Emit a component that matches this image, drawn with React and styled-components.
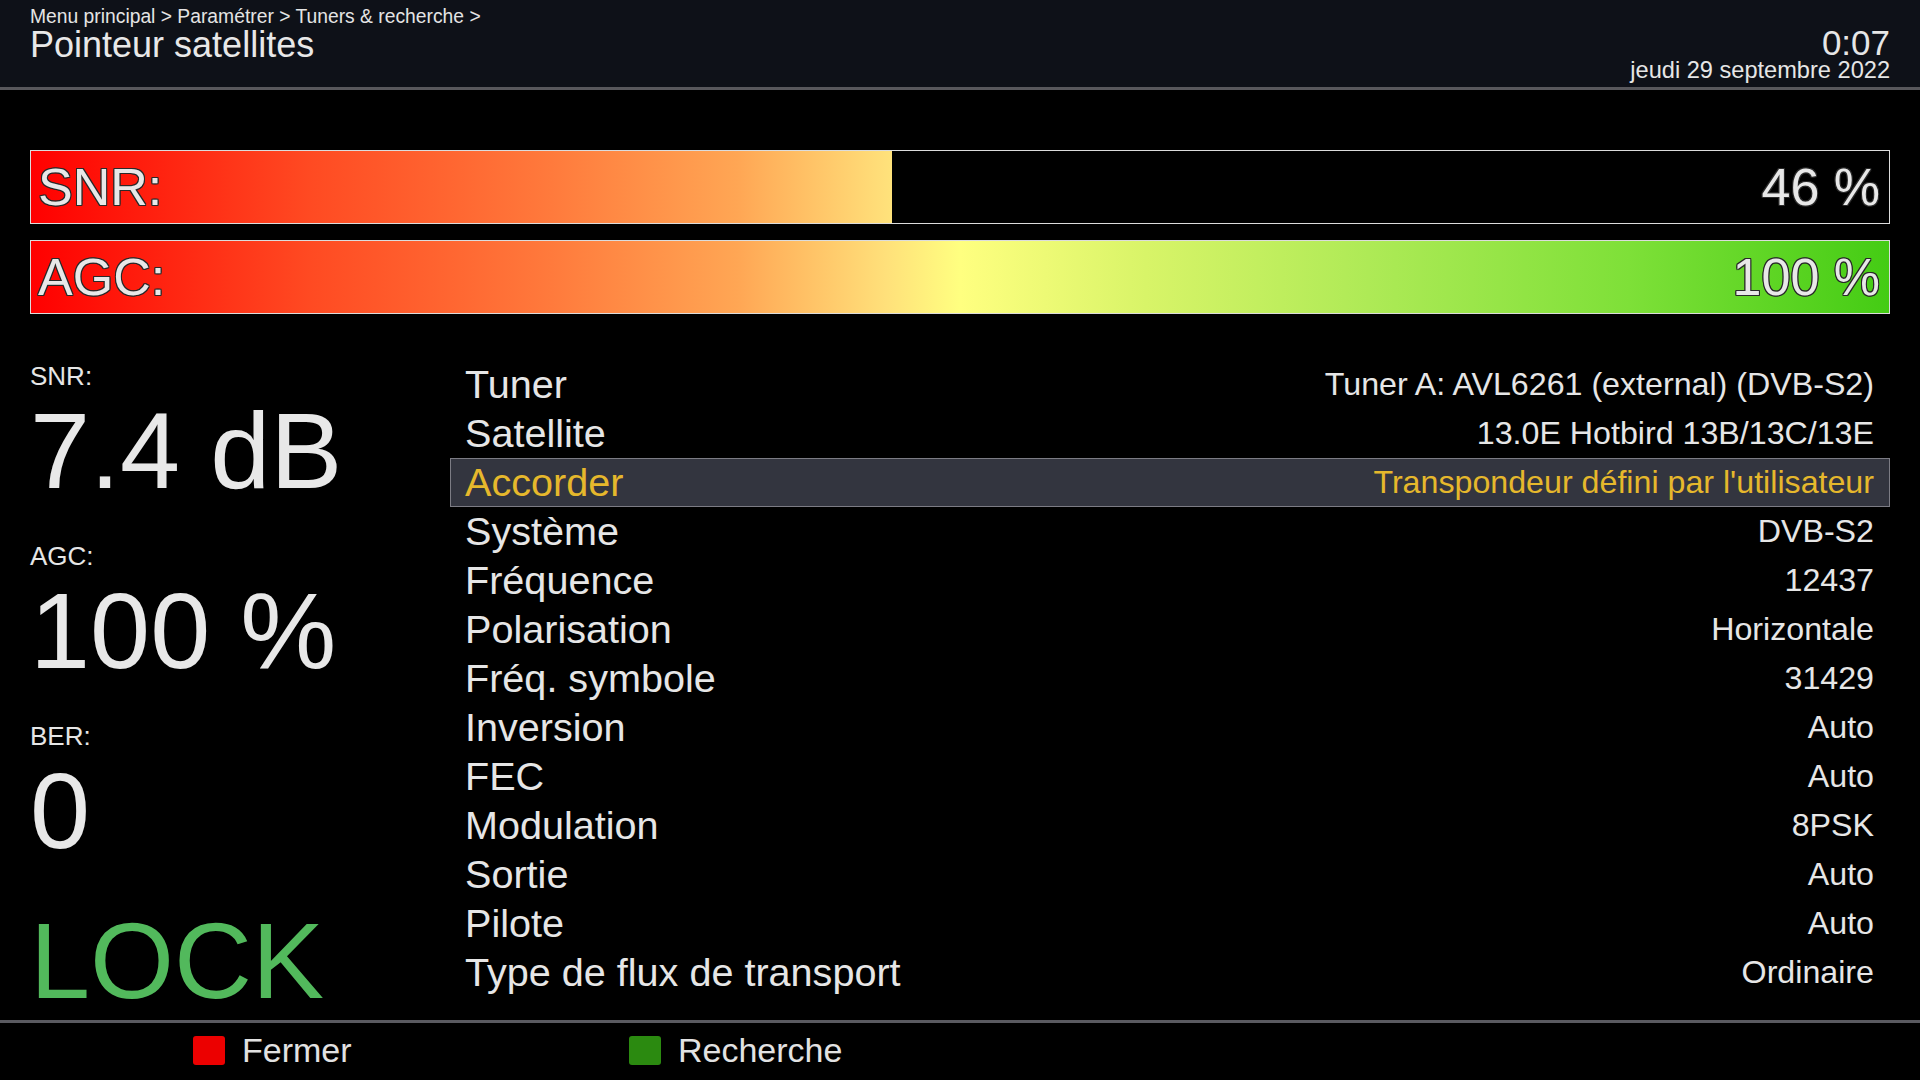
import styled, { createGlobalStyle } from 'styled-components';

const GlobalStyle = createGlobalStyle`
  html, body {
    margin: 0;
    padding: 0;
    background: #000;
  }
  body {
    font-family: "Liberation Sans", Arial, sans-serif;
    color: #e6e6e6;
  }
`;

const Page = styled.div`
  width: 1920px;
  height: 1080px;
  display: flex;
  flex-direction: column;
  background: #000;
  overflow: hidden;
`;

const Header = styled.header`
  height: 87px;
  flex-shrink: 0;
  display: flex;
  justify-content: space-between;
  padding: 0 30px;
  background: #0e1118;
  border-bottom: 3px solid #58585c;
`;

const TitleBlock = styled.div`
  display: flex;
  flex-direction: column;
  padding-top: 6px;
`;

const Breadcrumb = styled.div`
  font-size: 19.3px;
  line-height: 21px;
  color: #e4e4e4;
`;

const Title = styled.h1`
  margin: 0;
  font-size: 36px;
  line-height: 36px;
  font-weight: normal;
  color: #e8e8e8;
`;

const ClockBlock = styled.div`
  display: flex;
  flex-direction: column;
  align-items: flex-end;
  padding-top: 26px;
`;

const Clock = styled.div`
  font-size: 35px;
  line-height: 33px;
`;

const DateLine = styled.div`
  font-size: 23.6px;
  line-height: 22px;
`;

const Bars = styled.section`
  display: flex;
  flex-direction: column;
  gap: 16px;
  margin: 60px 30px 0;
`;

const Bar = styled.div`
  height: 74px;
  box-sizing: border-box;
  border: 1px solid #dcdcdc;
  display: grid;
  background: #000;
`;

const Fill = styled.div`
  grid-area: 1 / 1;
  justify-self: start;
  height: 100%;
  background-image: linear-gradient(
    to right,
    #ff0000 0%,
    #ff4a22 15%,
    #ff7a3c 28%,
    #ffa654 38%,
    #ffe07a 46%,
    #ffff80 50%,
    #d8f468 60%,
    #aeea56 72%,
    #7ee038 86%,
    #44cc14 100%
  );
  background-repeat: no-repeat;
`;

const BarText = styled.div`
  grid-area: 1 / 1;
  display: flex;
  align-items: center;
  justify-content: space-between;
  padding: 0 9px 0 7px;
  font-size: 52px;
  line-height: 1;
  color: #e8e8e8;
  text-shadow:
    1px 0 0 #2a2a2a, -1px 0 0 #2a2a2a, 0 1px 0 #2a2a2a, 0 -1px 0 #2a2a2a,
    1px 1px 0 #2a2a2a, -1px -1px 0 #2a2a2a, 1px -1px 0 #2a2a2a, -1px 1px 0 #2a2a2a;
`;

const Content = styled.main`
  flex: 1;
  display: grid;
  grid-template-columns: 420px 1fr;
  padding: 0 30px;
  margin-top: 46px;
`;

const Readouts = styled.div`
  display: flex;
  flex-direction: column;
  gap: 36px;
  padding-top: 1px;
`;

const Readout = styled.div`
  display: flex;
  flex-direction: column;
`;

const ReadoutLabel = styled.div`
  font-size: 26px;
  line-height: 30px;
  color: #e6e6e6;
`;

const ReadoutValue = styled.div`
  margin-top: 6px;
  font-size: 108px;
  line-height: 108px;
  color: #e8e8e8;
`;

const LockText = styled.div`
  margin-top: 6px;
  font-size: 108px;
  line-height: 108px;
  color: #52b95c;
`;

const List = styled.div`
  display: flex;
  flex-direction: column;
`;

const Row = styled.div`
  height: 49px;
  box-sizing: border-box;
  display: flex;
  align-items: center;
  justify-content: space-between;
  padding: 0 15px 0 14px;
  border: 1px solid ${(p) => (p.$selected ? '#7c7c84' : 'transparent')};
  background: ${(p) => (p.$selected ? '#33353f' : 'transparent')};
  color: ${(p) => (p.$selected ? '#e6b82c' : '#e6e6e6')};
`;

const RowLabel = styled.span`
  font-size: 39.6px;
  line-height: 1;
`;

const RowValue = styled.span`
  font-size: 32.2px;
  line-height: 1;
`;

const Footer = styled.footer`
  height: 60px;
  box-sizing: border-box;
  flex-shrink: 0;
  border-top: 3px solid #5a5a60;
  display: grid;
  grid-template-columns: repeat(4, 436px);
  align-items: center;
  padding: 0 0 3px 193px;
`;

const KeyHint = styled.div`
  display: flex;
  align-items: center;
  gap: 17px;
  font-size: 34px;
  color: #e2e2e2;
`;

const KeySwatch = styled.span`
  width: 32px;
  height: 29px;
  border-radius: 3px;
  background: ${(p) => p.$color};
`;

const rows = [
  ['Tuner', 'Tuner A: AVL6261 (external) (DVB-S2)'],
  ['Satellite', '13.0E Hotbird 13B/13C/13E'],
  ['Accorder', "Transpondeur défini par l'utilisateur"],
  ['Système', 'DVB-S2'],
  ['Fréquence', '12437'],
  ['Polarisation', 'Horizontale'],
  ['Fréq. symbole', '31429'],
  ['Inversion', 'Auto'],
  ['FEC', 'Auto'],
  ['Modulation', '8PSK'],
  ['Sortie', 'Auto'],
  ['Pilote', 'Auto'],
  ['Type de flux de transport', 'Ordinaire'],
];

// raw tuner readings, 0..65535
const signal = { snr: 30366, agc: 65535 };

const SignalBar = ({ label, raw }) => {
  const frac = raw / 65535;
  return (
    <Bar>
      <Fill
        style={{
          width: `${frac * 100}%`,
          backgroundSize: `${100 / frac}% 100%`,
        }}
      />
      <BarText>
        <span>{label}</span>
        <span>{Math.round(frac * 100)} %</span>
      </BarText>
    </Bar>
  );
};

const App = () => (
  <Page>
    <GlobalStyle />
    <Header>
      <TitleBlock>
        <Breadcrumb>Menu principal &gt; Paramétrer &gt; Tuners &amp; recherche &gt;</Breadcrumb>
        <Title>Pointeur satellites</Title>
      </TitleBlock>
      <ClockBlock>
        <Clock>0:07</Clock>
        <DateLine>jeudi 29 septembre 2022</DateLine>
      </ClockBlock>
    </Header>

    <Bars>
      <SignalBar label="SNR:" raw={signal.snr} />
      <SignalBar label="AGC:" raw={signal.agc} />
    </Bars>

    <Content>
      <Readouts>
        <Readout>
          <ReadoutLabel>SNR:</ReadoutLabel>
          <ReadoutValue>7.4 dB</ReadoutValue>
        </Readout>
        <Readout>
          <ReadoutLabel>AGC:</ReadoutLabel>
          <ReadoutValue>100 %</ReadoutValue>
        </Readout>
        <Readout>
          <ReadoutLabel>BER:</ReadoutLabel>
          <ReadoutValue>0</ReadoutValue>
        </Readout>
        <LockText>LOCK</LockText>
      </Readouts>

      <List>
        {rows.map(([label, value]) => (
          <Row key={label} $selected={label === 'Accorder'}>
            <RowLabel>{label}</RowLabel>
            <RowValue>{value}</RowValue>
          </Row>
        ))}
      </List>
    </Content>

    <Footer>
      <KeyHint>
        <KeySwatch $color="#ec0000" />
        Fermer
      </KeyHint>
      <KeyHint>
        <KeySwatch $color="#2b8a10" />
        Recherche
      </KeyHint>
    </Footer>
  </Page>
);

export default App;
